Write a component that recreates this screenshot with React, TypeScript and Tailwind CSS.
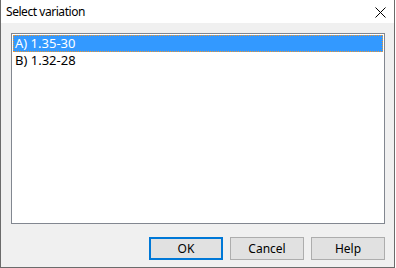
import React from 'react';

const items = ['A) 1.35-30', 'B) 1.32-28'];

export default function App() {
  return (
    <div className="w-[396px] h-[268px] bg-white" style={{ fontFamily: '"Noto Sans", "Liberation Sans", sans-serif' }}>
      <div className="w-[395px] h-full flex flex-col border-x border-b border-[#6b6b6b] text-[12px] text-black">
        <div className="h-[23px] bg-white flex items-center justify-between pl-[5px] pr-[8px]">
          <span className="tracking-[-0.45px] pt-[1px]">Select variation</span>
          <svg width="11" height="11" viewBox="0 0 11 11" className="mt-[2px]">
            <path d="M0.5 0.5 L10.5 10.5 M10.5 0.5 L0.5 10.5" stroke="#000" strokeWidth="1" />
          </svg>
        </div>
        <div className="flex-1 bg-[#f0f0f0] flex flex-col pl-[10px] pr-[9px] pt-[10px] pb-[7px]">
          <div className="h-[191px] bg-white border border-[#828790] p-[1px] text-[13px]">
            {items.map((it, i) => (
              <div
                key={it}
                className={
                  i === 0
                    ? 'h-[17px] flex items-center pl-[1px] bg-[#3399ff] text-white border border-dotted border-[#f0962d]'
                    : 'h-[17px] flex items-center pl-[2px] pt-[1px]'
                }
              >
                {it}
              </div>
            ))}
          </div>
          <div className="mt-auto flex justify-end gap-[7px]">
            <button className="w-[74px] h-[23px] bg-[#e1e1e1] border-2 border-[#0078d7]">OK</button>
            <button className="w-[74px] h-[23px] bg-[#e1e1e1] border border-[#adadad]">Cancel</button>
            <button className="w-[74px] h-[23px] bg-[#e1e1e1] border border-[#adadad]">Help</button>
          </div>
        </div>
      </div>
    </div>
  );
}
